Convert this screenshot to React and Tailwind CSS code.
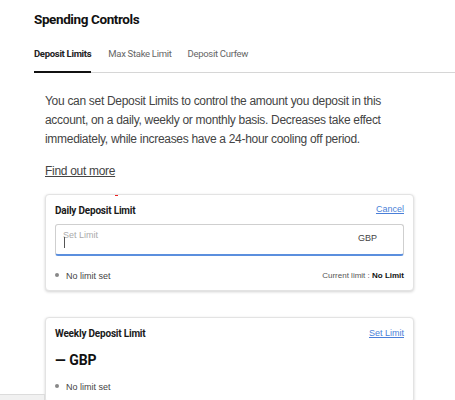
import React from "react";

const roboto = { fontFamily: "Roboto, 'Liberation Sans', sans-serif" };

function LimitCard({ title, action, children }) {
  return (
    <div className="rounded-[4px] border border-[#e3e3e3] bg-white px-[9px] pt-[8px] pb-[7px] shadow-[0_1px_3px_rgba(0,0,0,0.18)]">
      <div className="flex items-center justify-between">
        <span className="font-['Roboto'] text-[10px] font-bold tracking-[-0.2px] text-[#1a1a1a]">{title}</span>
        <a className="font-['Liberation_Sans'] text-[9px] text-[#4a7fd8] underline">{action}</a>
      </div>
      {children}
    </div>
  );
}

export default function App() {
  return (
    <div className="relative h-[400px] w-[455px] overflow-hidden bg-white">
      {/* Header */}
      <div className="pl-[34px] pt-[9px]">
        <h1 style={roboto} className="text-[13.5px] font-bold tracking-[-0.4px] text-[#111]">
          Spending Controls
        </h1>
      </div>

      {/* Tabs */}
      <div className="mt-[18px] ml-[34px] flex border-b border-[#d6d6d6] font-['Roboto'] text-[9.5px] tracking-[-0.3px]">
        <div className="-mb-px border-b-2 border-[#111] pb-[9px] font-bold text-[#222]">Deposit Limits</div>
        <div className="ml-[17px] pb-[9px] text-[#666]">Max Stake Limit</div>
        <div className="ml-[16px] pb-[9px] text-[#666]">Deposit Curfew</div>
      </div>

      {/* Content */}
      <div className="pl-[45px] pr-[41px] font-['Liberation_Sans']">
        <p className="mt-[19px] max-w-[345px] text-[12px] leading-[19px] tracking-[-0.3px] text-[#444]">
          You can set Deposit Limits to control the amount you deposit in this account, on a daily,
          weekly or monthly basis. Decreases take effect immediately, while increases have a 24-hour
          cooling off period.
        </p>
        <a className="mt-[13px] inline-block text-[12px] tracking-[-0.3px] text-[#444] underline">Find out more</a>

        <div className="relative mt-[12px]">
          <span className="absolute left-[70px] top-[1px] h-[1px] w-[3px] bg-[#e22]" />
          <LimitCard title="Daily Deposit Limit" action="Cancel">
            <div className="mt-[6px] flex h-[32px] items-stretch rounded-[3px] border border-[#cfcfcf] border-b-2 border-b-[#5b8fde]">
              <div className="relative flex-1 pl-[8px]">
                <span className="absolute left-[7px] top-[4px] text-[9px] text-[#aaa]">Set Limit</span>
                <span className="absolute left-[8px] top-[12px] h-[11px] w-px bg-[#555]" />
              </div>
              <span className="flex items-center pr-[26px] text-[9px] text-[#444]">GBP</span>
            </div>
            <div className="mt-[14px] flex items-center justify-between text-[9px]">
              <div className="flex items-center text-[#444]">
                <span className="-mt-[3px] mr-[7px] h-[4px] w-[4px] rounded-full bg-[#888]" />
                No limit set
              </div>
              <div className="text-[8px] text-[#555]">
                Current limit : <span className="font-bold text-[#111]">No Limit</span>
              </div>
            </div>
          </LimitCard>
        </div>

        <div className="mt-[26px]">
          <LimitCard title="Weekly Deposit Limit" action="Set Limit">
            <div style={roboto} className="mt-[9px] text-[14px] font-bold text-[#111]">
              — GBP
            </div>
            <div className="mt-[10px] flex items-center text-[9px] text-[#444]">
              <span className="-mt-[3px] mr-[7px] h-[4px] w-[4px] rounded-full bg-[#888]" />
              No limit set
            </div>
          </LimitCard>
        </div>
      </div>

      <div className="absolute bottom-0 left-0 h-[6px] w-[45px] border-t border-r border-[#dcdcdc] bg-[#f1f1f1]" />
    </div>
  );
}
